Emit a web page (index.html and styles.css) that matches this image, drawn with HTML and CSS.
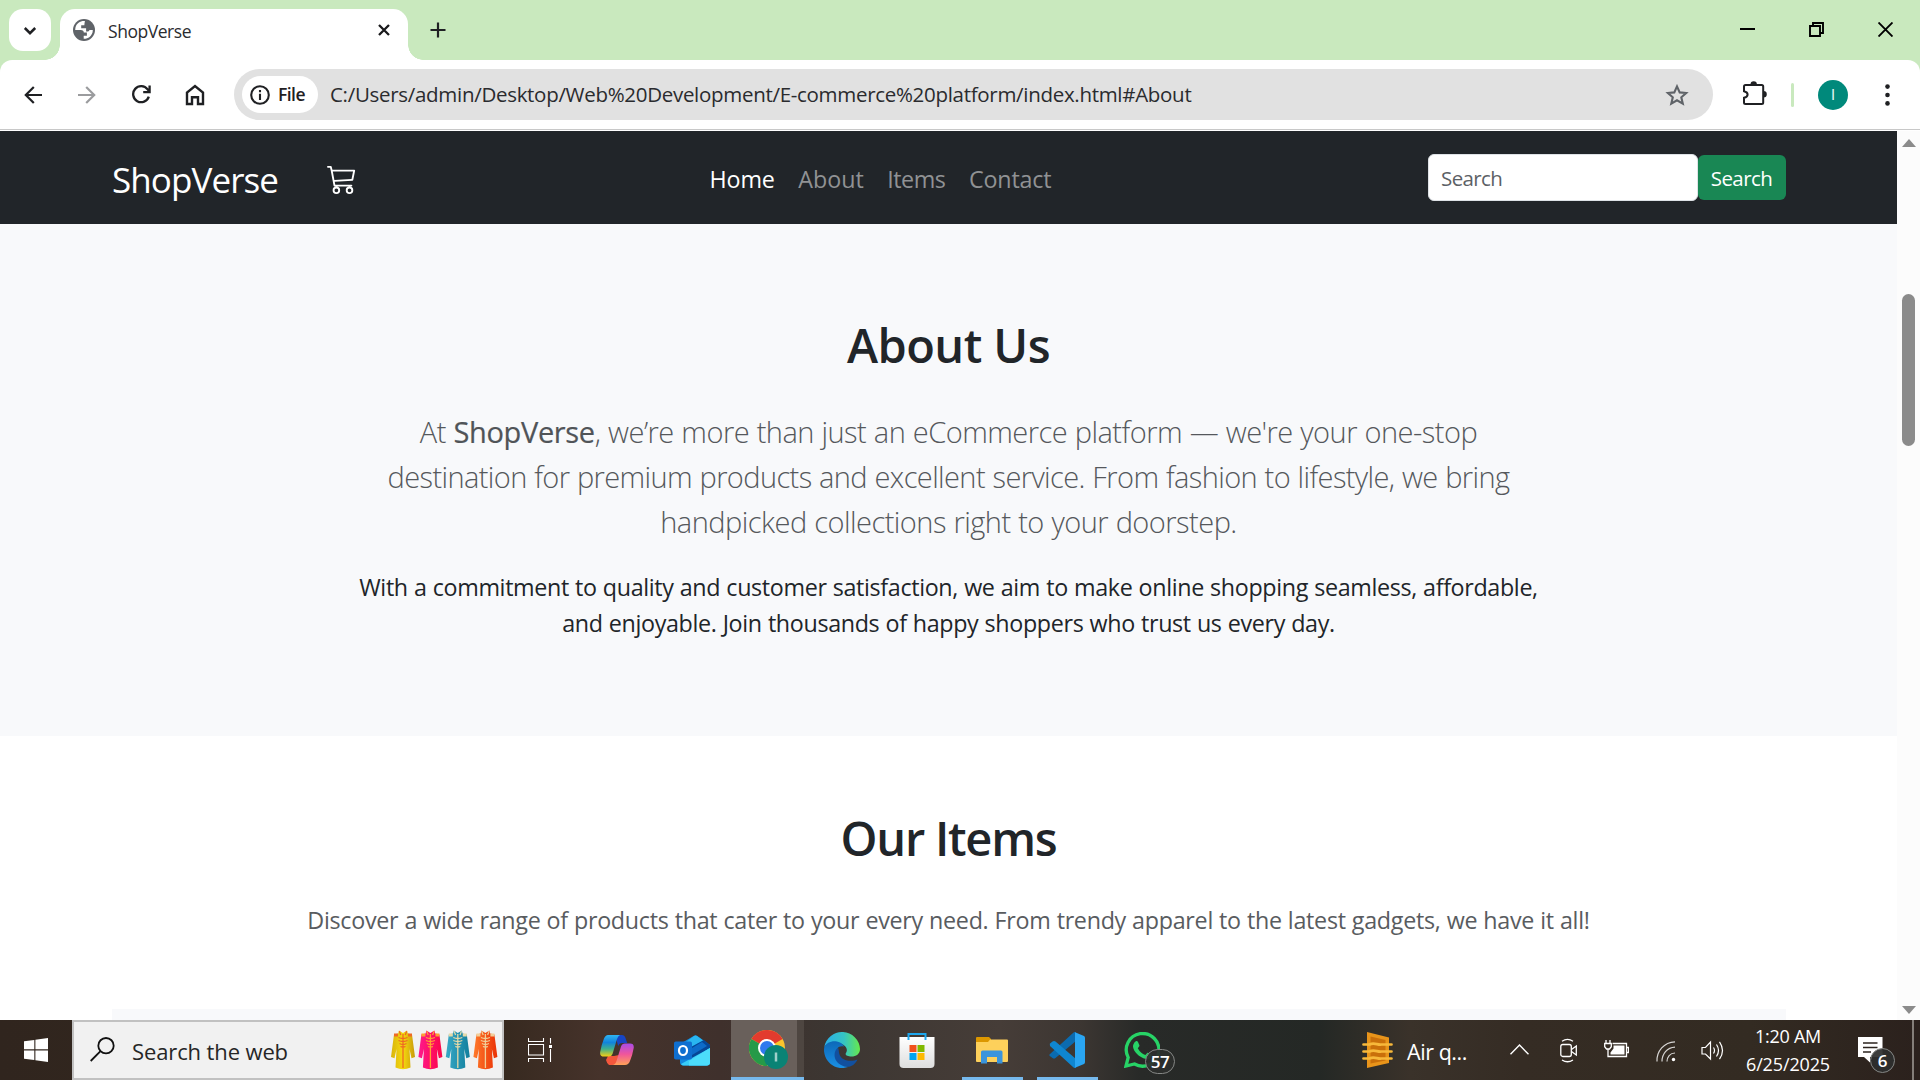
FILE: index.html
```html
<!DOCTYPE html>
<html lang="en">
<head>
<meta charset="utf-8">
<title>ShopVerse</title>
<link rel="stylesheet" href="styles.css">
</head>
<body>
<div class="screen">
  <header class="tabstrip">
    <button class="tab-search" aria-label="Search tabs">
      <svg width="14" height="10" viewBox="0 0 14 10"><path d="M1.8 2l5.2 5.2L12.200 2" fill="none" stroke="#1f2023" stroke-width="2.500"/></svg>
    </button>
    <div class="tab">
      <svg class="globe" width="22" height="22" viewBox="0 0 22 22"><circle cx="11" cy="11" r="11" fill="#5f6368"/><path d="M12 2.200C8 1.600 3.500 4 2.400 8.800L2.200 11h5.600c2 0 3 1 3 2.600h3.100v3.200h-3.200v2.900c4.500.2 7.800-2.600 8.900-6.500l.2-2.300h-3.400c-.2 1.400-1.500 1.700-3.300 1.500V9.200H8.200V6.200h3.200c.1-1.600.1-2.700.6-4z" fill="#fff"/></svg>
      <span class="tab-title">ShopVerse</span>
      <svg class="tab-close" width="12" height="12" viewBox="0 0 12 12"><path d="M1 1l10 10M11 1L1 11" stroke="#1a1a1c" stroke-width="2.300"/></svg>
    </div>
    <svg class="new-tab" width="16" height="16" viewBox="0 0 16 16"><path d="M8 .5v15M.5 8h15" stroke="#1f2023" stroke-width="2.200"/></svg>
    <div class="window-buttons">
      <svg width="15" height="15" viewBox="0 0 15 15"><path d="M0 7h15" stroke="#000" stroke-width="2"/></svg>
      <svg width="15" height="15" viewBox="0 0 15 15" fill="none" stroke="#000" stroke-width="1.900"><path d="M1 4h10v10H1zM4 4V1h10v10h-3"/></svg>
      <svg width="15" height="15" viewBox="0 0 15 15"><path d="M.5.5l14 14M14.500.5l-14 14" stroke="#000" stroke-width="1.900"/></svg>
    </div>
  </header>

  <div class="toolbar">
    <svg class="ico-back" width="18" height="18" viewBox="0 0 18 18" fill="none" stroke="#1f2023" stroke-width="2.200"><path d="M18 9H2M9.800 1L1.800 9l8 8"/></svg>
    <svg class="ico-forward" width="18" height="18" viewBox="0 0 18 18" fill="none" stroke="#9b9c9e" stroke-width="2.200"><path d="M0 9h16M8.200 1l8 8-8 8"/></svg>
    <svg class="ico-reload" width="19" height="19" viewBox="0 0 19 19" fill="none" stroke="#1f2023" stroke-width="2.300"><path d="M16.800 11.600A8 8 0 1 1 15.600 4.400l1.800 2.200M17.600.5v6.600h-6.400"/></svg>
    <svg class="ico-home" width="20" height="22" viewBox="0 0 20 22" fill="none" stroke="#1f2023" stroke-width="2.400"><path d="M2 20V8.600l8-6.600 8 6.600V20h-5v-6.800H7V20z"/></svg>
    <div class="omnibox">
      <div class="chip">
        <svg width="20" height="20" viewBox="0 0 20 20"><circle cx="10" cy="10" r="8.800" fill="none" stroke="#1f2023" stroke-width="2.100"/><path d="M10 8.800V15M10 5v2.200" stroke="#1f2023" stroke-width="2.100"/></svg>
        <span>File</span>
      </div>
      <span class="url">C:/Users/admin/Desktop/Web%20Development/E-commerce%20platform/index.html#About</span>
      <svg class="star" width="24" height="22" viewBox="0 0 24 22"><path d="M12 2.400l2.700 6 6.500.6-4.900 4.300 1.500 6.400-5.800-3.400-5.700 3.400 1.500-6.400L2.900 9l6.400-.6z" fill="none" stroke="#5f6368" stroke-width="2.100"/></svg>
    </div>
    <svg class="ico-ext" width="25" height="25" viewBox="0 0 25 25"><path d="M3.500 4h16.200a1.500 1.500 0 0 1 1.500 1.500v16a1.500 1.500 0 0 1-1.500 1.500H3.500A1.500 1.500 0 0 1 2 21.500v-4.700c4.800-1 4.800-5.500 0-6.600V5.500A1.500 1.500 0 0 1 3.500 4z" fill="none" stroke="#1f2023" stroke-width="2"/><path d="M8.500 3.500a3.200 3.200 0 0 1 6.400 0zM21.500 10a3.200 3.200 0 0 1 0 6.600z" fill="#1f2023"/></svg>
    <span class="divider"></span>
    <span class="avatar">I</span>
    <svg class="ico-menu" width="5" height="22" viewBox="0 0 5 22" fill="#1f2023"><circle cx="2.500" cy="2.600" r="2.300"/><circle cx="2.500" cy="11" r="2.300"/><circle cx="2.500" cy="19.400" r="2.300"/></svg>
  </div>

  <div class="viewport">
    <main class="page">
      <nav class="navbar">
        <a class="brand">ShopVerse</a>
        <svg class="cart" width="30" height="30" viewBox="0 0 16 16" fill="#fff"><path d="M0 1.500A.5.5 0 0 1 .5 1H2a.5.5 0 0 1 .485.379L2.890 3H14.500a.5.5 0 0 1 .49.598l-1 5a.5.5 0 0 1-.465.401l-9.397.472L4.415 11H13a.5.5 0 0 1 0 1H4a.5.5 0 0 1-.491-.408L2.010 3.607 1.610 2H.5a.5.5 0 0 1-.5-.5zM3.102 4l.84 4.479 9.144-.459L13.890 4H3.102zM5 12a2 2 0 1 0 0 4 2 2 0 0 0 0-4zm7 0a2 2 0 1 0 0 4 2 2 0 0 0 0-4zm-7 1a1 1 0 1 1 0 2 1 1 0 0 1 0-2zm7 0a1 1 0 1 1 0 2 1 1 0 0 1 0-2z"/></svg>
        <div class="links">
          <a class="active">Home</a><a class="about-link">About</a><a class="items-link">Items</a><a>Contact</a>
        </div>
        <form class="search">
          <div class="field">Search</div>
          <div class="submit">Search</div>
        </form>
      </nav>
      <section class="about">
        <h2>About Us</h2>
        <p class="lead"><span>At <strong>ShopVerse</strong>, we’re more than just an eCommerce platform — we're your one-stop</span><br><span class="tight">destination for premium products and excellent service. From fashion to lifestyle, we bring</span><br><span>handpicked collections right to your doorstep.</span></p>
        <p class="commit">With a commitment to quality and customer satisfaction, we aim to make online shopping seamless, affordable,<br>and enjoyable. Join thousands of happy shoppers who trust us every day.</p>
      </section>
      <section class="items">
        <h2>Our Items</h2>
        <p>Discover a wide range of products that cater to your every need. From trendy apparel to the latest gadgets, we have it all!</p>
        <div class="card"></div>
      </section>
    </main>
    <div class="scrollbar">
      <span class="arrow-up"></span>
      <span class="thumb"></span>
      <span class="arrow-down"></span>
    </div>
  </div>

  <footer class="taskbar">
    <div class="start"><svg width="24" height="24" viewBox="0 0 24 24" fill="#fff"><path d="M0 3.200L10.300 1.900V11.300H0zM11.400 1.700L24 0V11.300H11.400zM0 12.400H10.300V22L0 20.700zM11.400 12.400H24V24L11.400 22.200z"/></svg></div>
    <div class="searchbox">
      <svg width="25" height="25" viewBox="0 0 25 25" fill="none" stroke="#111" stroke-width="1.800"><circle cx="16" cy="8.700" r="7.700"/><path d="M10.500 14.200L.7 24"/></svg>
      <span>Search the web</span>
      <svg class="coats" width="109" height="40" viewBox="0 0 109 40">
        <defs>
          <linearGradient id="cy" x1="0" x2="1"><stop offset="0" stop-color="#d9b40c"/><stop offset=".5" stop-color="#f5d90f"/><stop offset="1" stop-color="#c99a0a"/></linearGradient>
          <linearGradient id="cp" x1="0" x2="1"><stop offset="0" stop-color="#ff1a8c"/><stop offset="1" stop-color="#fb0747"/></linearGradient>
          <linearGradient id="cb" x1="0" x2="1"><stop offset="0" stop-color="#38a9c6"/><stop offset="1" stop-color="#127f9d"/></linearGradient>
          <linearGradient id="co" x1="0" x2="1"><stop offset="0" stop-color="#ff7a2b"/><stop offset="1" stop-color="#ea3105"/></linearGradient>
          <g id="body"><path d="M9 .5l4 2.500 4-2.500.8 3L22 4.500l3 22.500-3.500 1.200L19.500 19l1 18.500q-7.500 3.500-15 0L6.500 19l-2 9.200L1 27 4 4.500l4.200-1z"/></g>
          <g id="trim" fill="none" stroke-width="1.300"><path d="M13 4v34M8.500 7.500q4.500 2 9 0M8.500 10.500q4.500 2 9 0M9.500 13.500q3.500 2 7 0M10.500 16.500q2.500 1 5 0"/><path d="M4 5h4M18 5h4" stroke-width="3"/><path d="M9.300 1.300l1.500 3.700M16.700 1.300l-1.500 3.700"/></g>
        </defs>
        <g><use href="#body" fill="url(#cy)"/><use href="#trim" stroke="#ee6a24"/></g>
        <g transform="translate(27.400)"><use href="#body" fill="url(#cp)"/><use href="#trim" stroke="#ffa033"/></g>
        <g transform="translate(54.800)"><use href="#body" fill="url(#cb)"/><use href="#trim" stroke="#e6d9a8"/></g>
        <g transform="translate(82.400)"><use href="#body" fill="url(#co)"/><use href="#trim" stroke="#f1cf9a"/></g>
      </svg>
    </div>
    <div class="apps">
      <div class="app taskview"><svg width="24" height="24" viewBox="0 0 24 24" fill="none" stroke="#fff" stroke-width="1.100"><path d="M.5 0v3.500h15V0M.5 24v-3.500h15V24M.5 6.500h15v10.500H.5zM22.500 0v5.500M22.500 11v13"/><path d="M21 7h3v3h-3z" fill="#fff" stroke="none"/></svg></div>
      <div class="app"><svg width="34" height="30" viewBox="0 0 34 30">
        <defs>
          <linearGradient id="k1" x1="0" x2="0" y1="0" y2="1"><stop offset="0" stop-color="#2fb5f3"/><stop offset=".35" stop-color="#1183dc"/><stop offset=".65" stop-color="#3fb08c"/><stop offset="1" stop-color="#f5cf13"/></linearGradient>
          <linearGradient id="k2" x1="0" x2="0" y1="0" y2="1"><stop offset="0" stop-color="#a84be8"/><stop offset=".5" stop-color="#f0569b"/><stop offset="1" stop-color="#ffa257"/></linearGradient>
        </defs>
        <path d="M15 0h7q2.500 0 3.500 3l1.700 5h-5q-3 0-4 3z" fill="#1745c4"/>
        <path d="M9 30q-2-1-3-5L8 21h6l5-1-2 8q-1 2-4 2z" fill="#f4573c"/>
        <path d="M8 0h12q-2 1-3 4l-4.500 15q-.8 2.500-4 2.500H4Q-.5 21.500.2 17 1.500 9.500 4 3.500 5.500 0 8 0z" fill="url(#k1)"/>
        <path d="M25 8.500h5q4.300 0 3.700 4.500-1.200 7-3.700 13-1.500 4-5 4H12.500q3-.5 4-4L21 11.500q1-3 4-3z" fill="url(#k2)"/></svg></div>
      <div class="app"><svg width="36" height="31" viewBox="0 0 36 31"><path d="M6 9L20 .8q1.500-1 3 0L36 10v17q0 3.500-3.500 3.500h-23Q6 30.500 6 27z" fill="#1289df"/><path d="M12 7L20 1q1.500-1 3 0l6 4.500-11 6z" fill="#29b6f0"/><path d="M18 11.500L30 5l6 5v3L18 24z" fill="#064696"/><path d="M18 13l10-6 5 4-15 9z" fill="#0d6bc9"/><path d="M36 13v14q0 3.500-3.500 3.500h-23Q8 30.500 7 29z" fill="#38cdf8"/><path d="M36 13v14q0 3.500-3.500 3.500H15V26z" fill="#4cdcfb"/><rect y="6.500" width="18" height="18" rx="1.800" fill="#0f6fd0"/><ellipse cx="9" cy="15.500" rx="4" ry="4.500" fill="none" stroke="#fff" stroke-width="2.200"/></svg></div>
      <div class="app chrome"><svg width="40" height="40" viewBox="0 0 40 40"><circle cx="18" cy="18" r="18" fill="#fbc52d"/><path d="M18 18L2.400 9A18 18 0 0 1 33.600 9z" fill="#e23b2e"/><path d="M2.400 9A18 18 0 0 0 18 36l7.500-13.500L18 18z" fill="#269a48"/><path d="M18 9h15.600L30 6z" fill="#e23b2e"/><circle cx="18" cy="18" r="9" fill="#fff"/><circle cx="18" cy="18" r="7" fill="#3079ee"/><circle cx="27" cy="27" r="12" fill="#0a8375"/><path d="M27 22.500v9" stroke="#9fd0ca" stroke-width="2.500"/></svg></div>
      <div class="app"><svg width="36" height="36" viewBox="0 0 36 36">
        <defs><linearGradient id="e1" x1="0" x2="1"><stop offset="0" stop-color="#2aaee8"/><stop offset=".55" stop-color="#35c4c4"/><stop offset="1" stop-color="#66e94c"/></linearGradient><linearGradient id="e2" x1="0" y1="0" x2="0" y2="1"><stop offset="0" stop-color="#0d68b8"/><stop offset="1" stop-color="#1a90e4"/></linearGradient></defs>
        <path d="M.3 15A18 18 0 0 1 36 17c0 5-4 7.500-8.500 7.500-4 0-7-1.500-5.500-3.500 2.500-4-.5-9-8-10C7 10.500 2 12 .3 15z" fill="url(#e1)"/>
        <path d="M.2 15.500C2 10.500 8 8.500 13 9.500c3.500.7 6 2.500 7 5-6-1.500-8 3-7.500 7C13 28 18 33 24 35A18 18 0 0 1 .2 15.500z" fill="url(#e2)"/>
        <path d="M14 15.500c-5 4-5 13 3 17.500 8 4.500 14 0 16.500-5.500-6 2.500-16 1.500-18-5-.8-2.500-.5-5-1.500-7z" fill="#12509f"/></svg></div>
      <div class="app"><svg width="36" height="36" viewBox="0 0 36 36"><defs><linearGradient id="s1" x1="0" x2="0" y1="0" y2="1"><stop offset="0" stop-color="#fff"/><stop offset="1" stop-color="#dedede"/></linearGradient></defs><path d="M.5 5h35v27q0 4-4 4h-27q-4 0-4-4z" fill="url(#s1)"/><path d="M9.500 8V2h17v6" fill="none" stroke="#1ea7ee" stroke-width="2"/><path d="M10.500 13h7v7h-7z" fill="#f1511b"/><path d="M18.500 13h7v7h-7z" fill="#80b900"/><path d="M10.500 21h7v7h-7z" fill="#00a3ee"/><path d="M18.500 21h7v7h-7z" fill="#fdb900"/></svg></div>
      <div class="app running"><svg width="32" height="27" viewBox="0 0 32 27"><path d="M0 1q0-1 1-1h12l2 2v5H0z" fill="#dc9700"/><path d="M0 5h12l2-2.500h17q1 0 1 1V24q0 1-1 1H1q-1 0-1-1z" fill="#fdd05b"/><path d="M5 26.500V15q0-1.500 1.500-1.500h18.500q1.500 0 1.500 1.500v11.500h-5.500V20H11v6.500z" fill="#3a94dc"/></svg></div>
      <div class="app running"><svg width="36" height="36" viewBox="0 0 36 36"><path d="M1 22l23-21q1.500-1.500 3-.5V9L6.500 26q-1.500 1.200-3 0L.8 24q-1-1 .2-2z" fill="#0b6bb0"/><path d="M1 14L.8 11.800 3.500 9.500q1.500-1.200 3 0L27 27v8.500q-1.500 1-3-.5z" fill="#0f86d0"/><path d="M26 .3L35 4q1 .5 1 2v24q0 1.500-1 2l-9 3.800z" fill="#2aa5f2"/></svg></div>
      <div class="app"><svg width="36" height="36" viewBox="0 0 36 36"><path d="M2 34l2.200-8.500A16.300 16.300 0 1 1 10.500 32z" fill="none" stroke="#27d366" stroke-width="3.300"/><path d="M11.500 9.500c1-.8 2-.5 2.500.6l1.400 3.200c.2.600 0 1-1.600 2.900 2 3.600 4.200 5.400 7.600 6.800 1.900-2.200 2-2.500 2.700-2.200l3.600 1.800c.5 3.700-3.300 5-5.700 4.500C15 25.500 9.500 19.500 9 14.800c-.1-2 .8-4 2.500-5.300z" fill="#27d366"/></svg><span class="badge count57">57</span></div>
    </div>
    <div class="weather">
      <svg width="31" height="36" viewBox="0 0 31 36"><path d="M5 0l22 5.500V31L5 36z" fill="#e8941a"/><path d="M8.500 4.500L23.500 8v20.500l-15 3z" fill="#c96f0a"/><g fill="none" stroke="#f7b83a" stroke-width="2.700" stroke-linecap="round"><path d="M1.500 12.500h6c5-2.500 8 .8 12 0h10M1.500 19.500h6c5-2.500 8 .8 12 0h10M1.500 26.500h6c5-2.500 8 .8 12 0h10"/></g></svg>
      <span>Air q...</span>
    </div>
    <div class="tray">
      <svg class="t-chev" width="19" height="11" viewBox="0 0 19 11" fill="none" stroke="#fff" stroke-width="1.400"><path d="M.5 10.300l9-9.300 9 9.300"/></svg>
      <svg class="t-cam" width="18" height="25" viewBox="0 0 18 25" fill="none" stroke="#fff" stroke-width="1.300"><rect x=".8" y="6.500" width="10.500" height="12" rx="2"/><path d="M11.500 11.500l4.800-3.500v9l-4.800-3.500M2 3.200q5.500-3.500 11 0M2 22q5.500 3.500 11 0"/></svg>
      <svg class="t-bat" width="25" height="18" viewBox="0 0 25 18" fill="none" stroke="#fff" stroke-width="1.300"><path d="M8.500 3.500h14v13H4v-4.500M23 7.500h1.500v5H23M2 0v3M6 0v3M.7 3.500h6.600v3.200L5.500 9h-3L.7 6.700zM4 9v4"/><path d="M9.500 5.500h11v9h-14v-2l3-4z" fill="#fff" stroke="none"/></svg>
      <svg class="t-wifi" width="20" height="21" viewBox="0 0 20 21" fill="none" stroke="#fff" stroke-width="1.200"><path d="M1 20.500C.5 10 8 1.200 19 .8M6 20.500C6 13 11 6.600 19 6.200M11 20.500c0-4.500 3-8.500 8-8.500" opacity=".8"/><circle cx="17.500" cy="18.500" r="1.700" fill="#fff" stroke="none"/></svg>
      <svg class="t-vol" width="23" height="21" viewBox="0 0 23 21" fill="none" stroke="#fff" stroke-width="1.200"><path d="M1 7.500h3.500L9.500 2v17l-5-5H1zM12.500 7.500q2 3 0 6M15.500 4.500q4 6 0 12M18.500 1.800q6 8.700 0 17.400"/></svg>
      <div class="clock"><span>1:20 AM</span><span class="date">6/25/2025</span></div>
      <div class="notify"><svg width="25" height="26" viewBox="0 0 25 26"><path d="M0 0h24.500v20H12v5.500L6 20H0z" fill="#fff"/><path d="M5 6h14.500M5 10.500h14.500M5 15h8" stroke="#2c241f" stroke-width="1.300"/></svg><span class="badge count6">6</span></div>
      <span class="peek"></span>
    </div>
  </footer>
</div>
</body>
</html>
```
FILE: styles.css
```css
* { box-sizing: border-box; }
body { margin: 0; font-family: "Open Sans", "Noto Sans", sans-serif; }
svg { display: block; flex: none; }
h2, p { margin: 0; }
.screen { width: 1920px; height: 1080px; display: flex; flex-direction: column; overflow: hidden; background: #c9e9be; }

/* tab strip */
.tabstrip { height: 60px; flex: none; display: flex; align-items: flex-start; padding: 9px 27px 0 9px; }
.tab-search { width: 42px; height: 42px; border: 0; border-radius: 14px; background: #fff; padding: 1px 0 0; display: flex; align-items: center; justify-content: center; }
.tab { position: relative; width: 348px; height: 51px; margin-left: 9px; padding: 0 18px 0 13px; display: flex; align-items: center; background: #fff; border-radius: 15px 15px 0 0; }
.tab::before, .tab::after { content: ""; position: absolute; bottom: 0; width: 15px; height: 15px; }
.tab::before { left: -15px; background: radial-gradient(circle at 0 0, transparent 14.500px, #fff 15px); }
.tab::after { right: -15px; background: radial-gradient(circle at 100% 0, transparent 14.500px, #fff 15px); }
.globe { margin-bottom: 9px; }
.tab-title { margin: 0 auto 7px 13px; font-size: 17.500px; letter-spacing: -.46px; color: #2b2c2f; }
.tab-close { margin-bottom: 9px; }
.new-tab { margin: 13px 0 0 22px; }
.window-buttons { margin: 13px 0 0 auto; display: flex; gap: 54px; }

/* toolbar */
.toolbar { height: 71px; flex: none; display: flex; align-items: center; padding: 0 30px 2px 24px; background: linear-gradient(#fff, #fff) 0 0 / 100% 69px no-repeat, linear-gradient(#c8c8c8, #c8c8c8) 0 69px / 100% 1px no-repeat, #fff; border-radius: 12px 12px 0 0; }
.ico-forward { margin-left: 36px; }
.ico-reload { margin-left: 36px; }
.ico-home { margin-left: 34px; }
.omnibox { width: 1479px; height: 51px; margin-left: 29px; padding: 0 24px 0 8px; display: flex; align-items: center; border-radius: 26px; background: #e1e1e1; }
.chip { width: 76px; height: 37px; border-radius: 19px; background: #fff; display: flex; align-items: center; gap: 8px; padding-left: 8px; font-size: 17.500px; font-weight: 600; letter-spacing: -.54px; color: #1f2023; }
.chip span { margin-bottom: 1px; }
.url { margin: 0 auto 2px 12px; font-size: 20.500px; letter-spacing: -.3px; color: #2a2b2e; white-space: nowrap; }
.ico-ext { margin-left: 29px; margin-bottom: 3px; }
.divider { width: 3px; height: 24px; margin-left: 24px; border-radius: 2px; background: #c9e9be; }
.avatar { width: 30px; height: 30px; margin: 0 37px 0 24px; border-radius: 50%; background: #00897b; color: #e3f3f1; font: 15px/30px Roboto, sans-serif; text-align: center; }

/* web page */
.viewport { height: 889px; flex: none; display: flex; background: #fff; }
.page { width: 1897px; overflow: hidden; color: #212529; }
.navbar { height: 93px; padding: 0 111px 0 112px; display: flex; align-items: center; background: #212529; white-space: nowrap; }
.brand { width: 166px; font-size: 35px; letter-spacing: -.92px; color: #fff; padding-top: 4px; }
.cart { margin-left: 49px; margin-top: 2px; }
.links { margin: 2px auto 0; padding-right: 24px; display: flex; gap: 23.500px; font-size: 23.300px; letter-spacing: -.16px; color: #909294; }
.links .active { color: #fff; }
.links .about-link { letter-spacing: 0; }
.links .items-link { letter-spacing: -.5px; }
.search { display: flex; align-items: center; font-size: 20.500px; letter-spacing: -.6px; }
.field { width: 270px; height: 47px; line-height: 46px; padding-left: 12px; border: 1px solid #dee2e6; border-radius: 6px; background: #fff; color: #5c6166; }
.submit { width: 88px; height: 45px; line-height: 46px; border-radius: 6px; background: #198754; color: #fff; text-align: center; padding-right: 1px; }
.about { height: 512px; padding-top: 92px; background: #f8f9fb; text-align: center; white-space: nowrap; }
h2 { font-size: 47px; font-weight: 600; line-height: 58px; letter-spacing: -.56px; }
.lead { margin-top: 35px; font-size: 29px; font-weight: 300; line-height: 45px; letter-spacing: -.53px; word-spacing: .6px; color: #55585c; }
.lead strong { font-weight: 400; letter-spacing: -.35px; color: #505458; -webkit-text-stroke: .2px; }
.lead .tight { letter-spacing: -.61px; }
.commit { margin-top: 25px; font-size: 23.300px; line-height: 36px; letter-spacing: -.35px; word-spacing: .45px; }
.items { padding-top: 73px; text-align: center; white-space: nowrap; }
.items h2 { letter-spacing: -1.250px; }
.items p { margin-top: 35px; font-size: 23.300px; line-height: 36px; letter-spacing: -.29px; word-spacing: .35px; color: #595c5f; }
.card { height: 100px; margin: 71px 111px 0 112px; background: #f8f9fb; }
.scrollbar { width: 23px; background: #fcfcfc; display: flex; flex-direction: column; align-items: center; padding: 8px 0 6px; }
.arrow-up, .arrow-down { border: 7.500px solid transparent; border-top-width: 0; border-bottom: 8px solid #8b8b8b; }
.arrow-down { border-top: 8px solid #8b8b8b; border-bottom-width: 0; margin-top: auto; }
.thumb { width: 13px; height: 152px; margin-top: 147px; border-radius: 7px; background: #8b8b8b; }

/* taskbar */
.taskbar { height: 60px; flex: none; display: flex; color: #fff; background: linear-gradient(90deg, #30251e 0, #36291f 500px, #46332b 600px, #3f302c 720px, #3c3632 830px, #463d38 1000px, #3c3632 1080px, #282a28 1140px, #242825 1320px, #3a322a 1410px, #352c24 1520px, #332b22 1750px, #2b211d 1920px); }
.start { width: 72px; display: flex; align-items: center; justify-content: center; }
.searchbox { width: 432px; border: 2px solid #c1c1c1; background: #f1f1f1; color: #262626; display: flex; align-items: center; padding: 0 3px 0 16px; font-size: 22px; letter-spacing: -.12px; }
.searchbox > svg:first-child { margin-bottom: 1px; }
.searchbox span { margin: 2px auto 0 17px; }
.apps { display: grid; grid-template-columns: 75px repeat(8, 75px); }
.app { position: relative; display: flex; align-items: center; justify-content: center; }
.taskview { padding-right: 3px; }
.chrome { margin: 0 0 0 2px; padding: 3px 0 0 2px; background: linear-gradient(90deg, #69605b 66px, #4e4641 66px); border-bottom: 3px solid #76b9ed; width: 73px; }
.running::after { content: ""; position: absolute; bottom: 0; left: 8px; width: 61px; height: 3px; background: #76b9ed; }
.badge { position: absolute; display: flex; align-items: center; justify-content: center; height: 25px; border: 1.500px solid #858785; border-radius: 13px; background: rgba(45, 46, 45, .93); font-size: 17px; font-weight: 600; }
.count57 { left: 41px; top: 29px; width: 30px; letter-spacing: -.5px; }
.weather { margin-left: 183px; display: flex; align-items: center; gap: 14px; font-size: 21.500px; letter-spacing: -.44px; }
.weather span { width: 60px; padding-top: 2px; }
.tray { flex: 1; display: flex; align-items: center; }
.t-chev { margin-left: 43px; margin-bottom: 2px; }
.t-cam { margin-left: 31px; }
.t-bat { margin-left: 26px; margin-bottom: 2px; }
.t-wifi { margin-left: 27px; margin-top: 3px; }
.t-vol { margin-left: 25px; }
.clock { width: 86px; margin-left: 21px; display: flex; flex-direction: column; align-items: center; font-size: 18px; line-height: 27.500px; letter-spacing: -.27px; padding-top: 1px; }
.date { letter-spacing: -.14px; }
.notify { position: relative; margin-left: 27px; }
.count6 { left: 12px; top: 11px; width: 25px; }
.peek { width: 2px; height: 60px; margin-left: auto; margin-right: 6px; background: #847e79; }
```
